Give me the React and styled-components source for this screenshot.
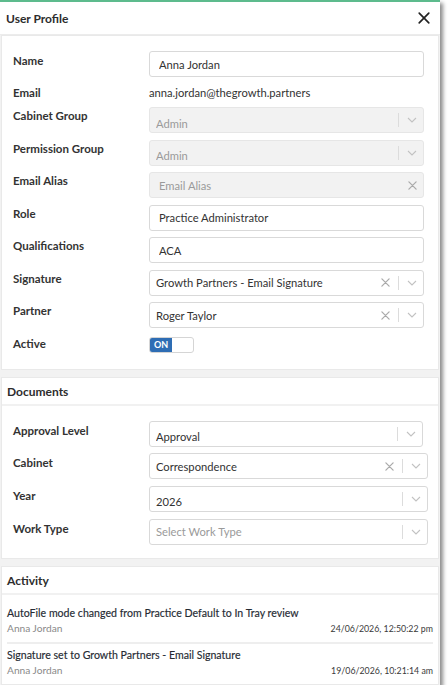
import React from "react";
import styled, { createGlobalStyle } from "styled-components";

const Global = createGlobalStyle`
  html, body { margin: 0; padding: 0; background: #ffffff; }
  body { font-family: "Lato", "Noto Sans", sans-serif; color: #333; }
  * { box-sizing: border-box; }
`;

const Window = styled.div`
  width: 440px;
  height: 685px;
  background: #f2f2f2;
  border-top: 2px solid #5dbb8d;
  box-shadow: 3px 3px 4px rgba(0, 0, 0, 0.45);
  display: flex;
  flex-direction: column;
  overflow: hidden;
`;

const Header = styled.div`
  height: 33px;
  flex: none;
  background: #fff;
  border-bottom: 1px solid #ececec;
  display: flex;
  align-items: center;
  justify-content: space-between;
  padding: 0 9px 0 6px;
`;

const Title = styled.div`
  font-size: 12px;
  font-weight: 700;
  color: #2d2d2d;
`;

const CloseBtn = styled.button`
  border: 0;
  background: transparent;
  padding: 0;
  width: 14px;
  height: 14px;
  display: flex;
  align-items: center;
  justify-content: center;
  cursor: pointer;
`;

const Card = styled.section`
  background: #fff;
  border: 1px solid #e9e9e9;
  margin: ${(p) => p.$mt || 0}px 1px 0;
  flex: none;
`;

const CardHeader = styled.div`
  height: 28px;
  display: flex;
  align-items: center;
  padding: 1px 5px 0;
  font-size: 12px;
  font-weight: 700;
  color: #2d2d2d;
  border-bottom: 2px solid #f1f1f1;
`;

const Form = styled.div`
  display: flex;
  flex-direction: column;
  gap: ${(p) => p.$gap || 6.5}px;
  padding: ${(p) => p.$pad || "15px 0 15px 11px"};
`;

const Row = styled.div`
  display: grid;
  grid-template-columns: 136px 1fr;
  align-items: start;
  min-height: ${(p) => p.$h || 26}px;
`;

const Label = styled.div`
  font-size: 11.5px;
  font-weight: 700;
  color: #333;
  padding-top: ${(p) => p.$pt ?? 1}px;
  line-height: 16px;
`;

const Field = styled.div`
  height: 26px;
  width: ${(p) => p.$w || 275}px;
  border: 1px solid ${(p) => (p.$disabled ? "#e6e6e6" : "#d9d9d9")};
  border-radius: 3px;
  background: ${(p) => (p.$disabled ? "#f2f2f2" : "#fff")};
  display: flex;
  align-items: center;
  padding: 0 0 0 ${(p) => p.$pl || 6}px;
  font-size: 11.2px;
  color: ${(p) => (p.$muted ? "#9a9a9a" : "#333")};
`;

const Value = styled.div`
  flex: 1;
  white-space: nowrap;
  overflow: hidden;
  padding-top: ${(p) => p.$pt || 0}px;
`;

const PlainValue = styled.div`
  font-size: 11.2px;
  color: #333;
  line-height: 16px;
  padding-top: 1px;
`;

const Icons = styled.div`
  display: flex;
  align-items: center;
  height: 100%;
  padding-right: 6px;
`;

const Sep = styled.span`
  width: 1px;
  height: 14px;
  background: #dcdcdc;
  margin: 0 8px 0 8px;
`;

const IconBox = styled.span`
  display: flex;
  align-items: center;
  justify-content: center;
  width: 10px;
`;

const Toggle = styled.div`
  width: 45px;
  height: 16px;
  border: 1px solid #d5d5d5;
  border-radius: 3px;
  display: flex;
  overflow: hidden;
  margin-top: 2px;
`;

const ToggleOn = styled.div`
  width: 22px;
  background: #2e6db4;
  color: #fff;
  font-size: 9px;
  font-weight: 700;
  display: flex;
  align-items: center;
  justify-content: center;
`;

const ActivityList = styled.div`
  padding: 7px 5px 0 5px;
`;

const Item = styled.div`
  padding: 4px 0 6px;
  border-bottom: ${(p) => (p.$last ? "none" : "2px solid #eeeeee")};
`;

const ItemTitle = styled.div`
  font-size: 10.6px;
  color: #262b33;
  line-height: 15px;
  -webkit-text-stroke: 0.15px #262b33;
`;

const ItemMeta = styled.div`
  display: flex;
  justify-content: space-between;
  align-items: baseline;
  line-height: 14px;
`;

const ItemUser = styled.span`
  font-size: 10.2px;
  color: #8a8a8a;
`;

const ItemDate = styled.span`
  font-size: 8.8px;
  color: #3a3a3a;
`;

const Cross = ({ size = 9, color = "#aaa", w = 1.4 }) => (
  <svg width={size} height={size} viewBox="0 0 10 10">
    <path d="M1 1 L9 9 M9 1 L1 9" stroke={color} strokeWidth={w} strokeLinecap="round" />
  </svg>
);

const Chevron = () => (
  <svg width="10" height="6" viewBox="0 0 10 6">
    <path d="M1 1 L5 5 L9 1" stroke="#c2c2c2" strokeWidth="1.1" fill="none" />
  </svg>
);

const Select = ({ value, clear, disabled, muted, w, pt }) => (
  <Field $disabled={disabled} $muted={muted || disabled} $w={w}>
    <Value $pt={pt}>{value}</Value>
    <Icons>
      {clear && (
        <IconBox>
          <Cross />
        </IconBox>
      )}
      <Sep />
      <IconBox>
        <Chevron />
      </IconBox>
    </Icons>
  </Field>
);

export default function App() {
  return (
    <>
      <Global />
      <Window>
        <Header>
          <Title>User Profile</Title>
          <CloseBtn aria-label="Close">
            <Cross size={12} color="#222" w={1.4} />
          </CloseBtn>
        </Header>

        <Card>
          <Form $pad="15px 0 16px 11px">
            <Row>
              <Label $pt={2}>Name</Label>
              <Field $pl={9}>
                <Value>Anna Jordan</Value>
              </Field>
            </Row>
            <Row $h={16}>
              <Label $pt={1}>Email</Label>
              <PlainValue>anna.jordan@thegrowth.partners</PlainValue>
            </Row>
            <Row>
              <Label $pt={1}>Cabinet Group</Label>
              <Select value="Admin" disabled pt={6} />
            </Row>
            <Row>
              <Label $pt={1}>Permission Group</Label>
              <Select value="Admin" disabled pt={6} />
            </Row>
            <Row>
              <Label $pt={1}>Email Alias</Label>
              <Field $disabled $muted $pl={9}>
                <Value>Email Alias</Value>
                <Icons>
                  <IconBox>
                    <Cross />
                  </IconBox>
                </Icons>
              </Field>
            </Row>
            <Row>
              <Label $pt={1}>Role</Label>
              <Field $pl={9}>
                <Value>Practice Administrator</Value>
              </Field>
            </Row>
            <Row>
              <Label $pt={1}>Qualifications</Label>
              <Field $pl={9}>
                <Value>ACA</Value>
              </Field>
            </Row>
            <Row>
              <Label $pt={1}>Signature</Label>
              <Select value="Growth Partners - Email Signature" clear />
            </Row>
            <Row>
              <Label $pt={1}>Partner</Label>
              <Select value="Roger Taylor" clear />
            </Row>
            <Row $h={16}>
              <Label $pt={1}>Active</Label>
              <Toggle>
                <ToggleOn>ON</ToggleOn>
              </Toggle>
            </Row>
          </Form>
        </Card>

        <Card $mt={7}>
          <CardHeader>Documents</CardHeader>
          <Form $gap={6.7} $pad="15px 0 13px 11px">
            <Row>
              <Label $pt={2}>Approval Level</Label>
              <Select value="Approval" w={274} pt={5} />
            </Row>
            <Row>
              <Label $pt={2}>Cabinet</Label>
              <Select value="Correspondence" clear w={279} />
            </Row>
            <Row>
              <Label $pt={2}>Year</Label>
              <Select value="2026" w={279} pt={5} />
            </Row>
            <Row>
              <Label $pt={2}>Work Type</Label>
              <Select value="Select Work Type" muted w={279} />
            </Row>
          </Form>
        </Card>

        <Card $mt={7}>
          <CardHeader>Activity</CardHeader>
          <ActivityList>
            <Item>
              <ItemTitle>AutoFile mode changed from Practice Default to In Tray review</ItemTitle>
              <ItemMeta>
                <ItemUser>Anna Jordan</ItemUser>
                <ItemDate>24/06/2026, 12:50:22 pm</ItemDate>
              </ItemMeta>
            </Item>
            <Item $last>
              <ItemTitle>Signature set to Growth Partners - Email Signature</ItemTitle>
              <ItemMeta>
                <ItemUser>Anna Jordan</ItemUser>
                <ItemDate>19/06/2026, 10:21:14 am</ItemDate>
              </ItemMeta>
            </Item>
          </ActivityList>
        </Card>
      </Window>
    </>
  );
}
